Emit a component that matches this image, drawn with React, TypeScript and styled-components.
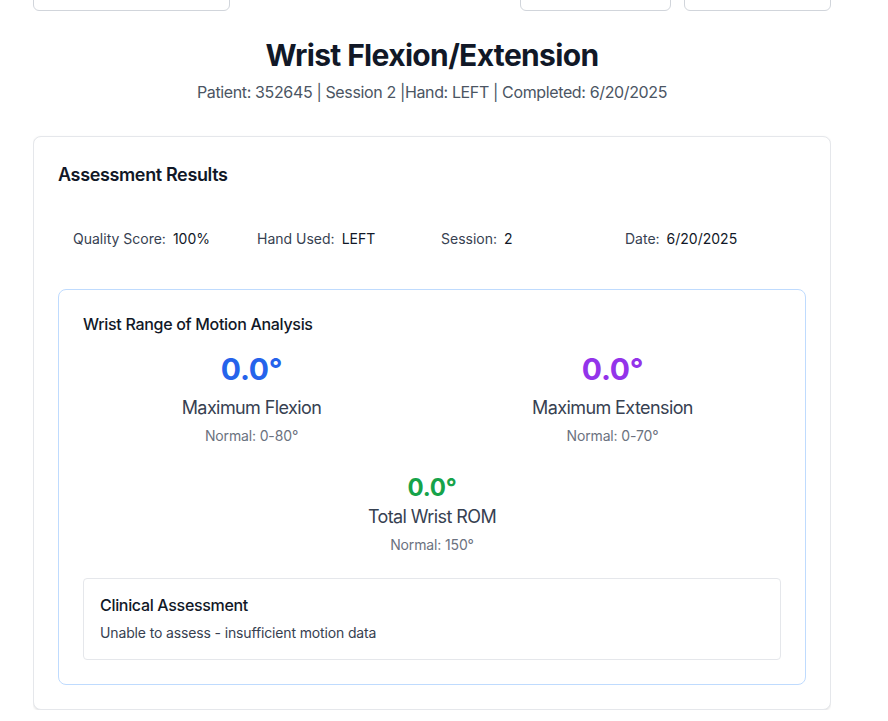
import React from "react";
import styled, { createGlobalStyle } from "styled-components";

const Global = createGlobalStyle`
  html, body { margin: 0; padding: 0; background: #ffffff; }
  body { font-family: Inter, "Noto Sans", "Liberation Sans", sans-serif; color: #111827; -webkit-font-smoothing: antialiased; }
  * { box-sizing: border-box; }
`;

const Page = styled.div`
  width: 798px;
  margin-left: 33px;
  overflow: hidden;
`;

const Toolbar = styled.div`
  display: flex;
  align-items: center;
  justify-content: space-between;
  margin-top: -29px;
  height: 40px;
`;

const ButtonGroup = styled.div`
  display: flex;
  gap: 13px;
`;

const ToolButton = styled.button<{ $w: number }>`
  width: ${(p) => p.$w}px;
  height: 40px;
  background: #ffffff;
  border: 1px solid #d1d5db;
  border-radius: 6px;
  padding: 0;
`;

const Header = styled.header`
  text-align: center;
  margin-top: 26px;
`;

const Title = styled.h1`
  margin: 0;
  font-size: 30px;
  line-height: 36px;
  font-weight: 700;
  color: #111827;
  letter-spacing: -0.022em;
`;

const Subtitle = styled.p`
  margin: 7px 0 0;
  font-size: 16px;
  line-height: 24px;
  color: #4b5563;
  letter-spacing: -0.023em;
`;

const Card = styled.section`
  margin-top: 32px;
  border: 1px solid #e5e7eb;
  border-radius: 8px;
  box-shadow: 0 1px 3px rgba(0, 0, 0, 0.08), 0 1px 2px rgba(0, 0, 0, 0.04);
  padding: 24px;
  background: #fff;
`;

const CardTitle = styled.h2`
  margin: 0;
  font-size: 18px;
  line-height: 28px;
  font-weight: 600;
  color: #111827;
  letter-spacing: -0.02em;
`;

const StatsGrid = styled.div`
  display: grid;
  grid-template-columns: repeat(4, 184px);
  margin-top: 24px;
`;

const Stat = styled.div`
  padding: 16px 15px;
  font-size: 14px;
  line-height: 20px;
  color: #374151;
  white-space: nowrap;
`;

const StatValue = styled.span`
  color: #111827;
  margin-left: 7px;
`;

const Panel = styled.div`
  margin-top: 24px;
  border: 1px solid #bfdbfe;
  border-radius: 8px;
  padding: 24px;
`;

const PanelTitle = styled.h3`
  margin: 0;
  font-size: 16px;
  line-height: 20px;
  font-weight: 500;
  color: #111827;
  letter-spacing: -0.019em;
`;

const MetricsRow = styled.div`
  display: grid;
  grid-template-columns: 1fr 1fr;
  gap: 24px;
  margin-top: 17px;
`;

const Metric = styled.div`
  display: flex;
  flex-direction: column;
  align-items: center;
  text-align: center;
`;

const MetricValue = styled.div<{ $color: string; $size: number }>`
  font-size: ${(p) => p.$size}px;
  line-height: ${(p) => (p.$size === 30 ? 36 : 32)}px;
  font-weight: 700;
  color: ${(p) => p.$color};
  letter-spacing: -0.01em;
`;

const MetricLabel = styled.div<{ $tight?: boolean }>`
  margin-top: ${(p) => (p.$tight ? -1 : 7)}px;
  font-size: 18px;
  line-height: 28px;
  color: #374151;
  letter-spacing: -0.033em;
`;

const MetricNormal = styled.div`
  margin-top: 4px;
  font-size: 14px;
  line-height: 20px;
  color: #6b7280;
  letter-spacing: -0.01em;
`;

const TotalRow = styled.div`
  margin-top: 26px;
`;

const Clinical = styled.div`
  margin-top: 23px;
  border: 1px solid #e5e7eb;
  border-radius: 4px;
  padding: 16px;
`;

const ClinicalTitle = styled.h4`
  margin: 0;
  font-size: 16px;
  line-height: 20px;
  font-weight: 500;
  color: #111827;
  letter-spacing: -0.02em;
`;

const ClinicalText = styled.p`
  margin: 8px 0 0;
  font-size: 14px;
  line-height: 20px;
  color: #374151;
  letter-spacing: -0.01em;
`;

export default function App() {
  return (
    <>
      <Global />
      <Page>
        <Toolbar>
          <ToolButton $w={197} />
          <ButtonGroup>
            <ToolButton $w={151} />
            <ToolButton $w={147} />
          </ButtonGroup>
        </Toolbar>
        <Header>
          <Title>Wrist Flexion/Extension</Title>
          <Subtitle>Patient: 352645 | Session 2 |Hand: LEFT | Completed: 6/20/2025</Subtitle>
        </Header>
        <Card>
          <CardTitle>Assessment Results</CardTitle>
          <StatsGrid>
            <Stat>
              Quality Score:<StatValue>100%</StatValue>
            </Stat>
            <Stat>
              Hand Used:<StatValue>LEFT</StatValue>
            </Stat>
            <Stat>
              Session:<StatValue>2</StatValue>
            </Stat>
            <Stat>
              Date:<StatValue>6/20/2025</StatValue>
            </Stat>
          </StatsGrid>
          <Panel>
            <PanelTitle>Wrist Range of Motion Analysis</PanelTitle>
            <MetricsRow>
              <Metric>
                <MetricValue $color="#2563eb" $size={30}>0.0°</MetricValue>
                <MetricLabel>Maximum Flexion</MetricLabel>
                <MetricNormal>Normal: 0-80°</MetricNormal>
              </Metric>
              <Metric>
                <MetricValue $color="#9333ea" $size={30}>0.0°</MetricValue>
                <MetricLabel>Maximum Extension</MetricLabel>
                <MetricNormal>Normal: 0-70°</MetricNormal>
              </Metric>
            </MetricsRow>
            <TotalRow>
              <Metric>
                <MetricValue $color="#16a34a" $size={24}>0.0°</MetricValue>
                <MetricLabel $tight>Total Wrist ROM</MetricLabel>
                <MetricNormal>Normal: 150°</MetricNormal>
              </Metric>
            </TotalRow>
            <Clinical>
              <ClinicalTitle>Clinical Assessment</ClinicalTitle>
              <ClinicalText>Unable to assess - insufficient motion data</ClinicalText>
            </Clinical>
          </Panel>
        </Card>
      </Page>
    </>
  );
}
